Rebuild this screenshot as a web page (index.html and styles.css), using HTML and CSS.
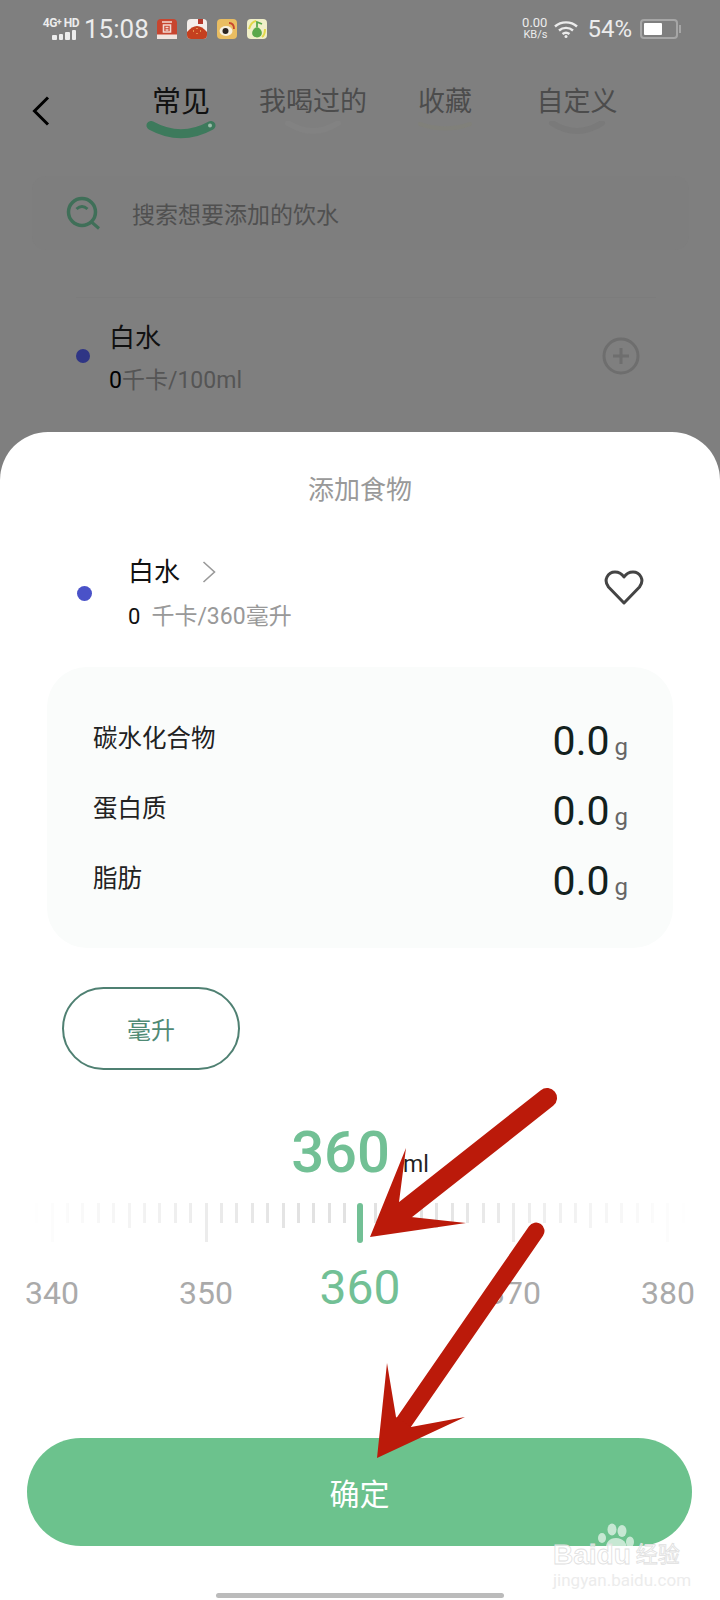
FILE: index.html
```html
<!doctype html>
<html lang="zh-CN">
<head>
    <meta charset="UTF-8">
    <title>添加食物</title>
    <link rel="stylesheet" href="styles.css">
</head>
<body>
    <div class="page">
        <!-- status bar -->
        <div class="status">
            <div class="net">
                <span class="net-type">4G<sup>+</sup> HD</span>
                <span class="bars"><i class="b1"></i><i class="b2"></i><i class="b3"></i><i class="b4"></i></span>
            </div>
            <span class="time">15:08</span>
            <div class="apps">
                <svg width="20" height="20" viewBox="0 0 20 20"><rect width="20" height="20" rx="4" fill="#c8452f"/><path d="M5 3h10M6.500 6h7v7h-7zM8.500 8.500h3M8.500 11h3" fill="none" stroke="#f3d9d2" stroke-width="1.600"/><rect y="15.500" width="20" height="4.500" fill="#f1e4df"/></svg>
                <svg width="20" height="20" viewBox="0 0 20 20"><rect width="20" height="20" rx="4" fill="#f4eeea"/><rect x="11" width="5" height="5" fill="#b5392b"/><path d="M0 13Q10 1 20 13V16Q20 20 16 20H4Q0 20 0 16Z" fill="#c5401f"/><path d="M6 12h1M10 9v1M14 12h-1M10 14v1" stroke="#f0b060" stroke-width="1.400"/></svg>
                <svg width="20" height="20" viewBox="0 0 20 20"><rect width="20" height="20" rx="4" fill="#e9bd62"/><ellipse cx="9" cy="12" rx="6.500" ry="5" fill="#f7f0e0"/><circle cx="8.500" cy="12" r="3" fill="#2a2320"/><path d="M12 4Q17 4 17 10" fill="none" stroke="#c8452f" stroke-width="1.800"/></svg>
                <svg width="20" height="20" viewBox="0 0 20 20"><rect width="20" height="20" rx="4" fill="#f0efc8"/><path d="M10 8C4 10 3 18 10 18.500C17 18 16 10 10 8Z" fill="#5aa84a"/><path d="M10 8V3L15 5" fill="none" stroke="#5aa84a" stroke-width="1.800"/><path d="M2 10Q4 3 9 2M18 10Q18 16 15 18" fill="none" stroke="#e2d84a" stroke-width="2"/></svg>
            </div>
            <div class="speed"><span>0.00</span><span class="speed-unit">KB/s</span></div>
            <svg class="wifi" width="24" height="18" viewBox="0 0 24 18"><path d="M1 6.500C7 1 17 1 23 6.500M5 10.500C9 7 15 7 19 10.500M8.500 14C10.500 12.500 13.500 12.500 15.500 14" fill="none" stroke="#ececec" stroke-width="2.400"/><circle cx="12" cy="16.500" r="1.500" fill="#ececec"/></svg>
            <span class="pct">54%</span>
            <div class="battery"><i class="battery-fill"></i></div>
        </div>

        <!-- page behind the sheet -->
        <div class="tabs">
            <svg class="back" width="18" height="30" viewBox="0 0 18 30"><path d="M16 1.500L2.500 15L16 28.500" fill="none" stroke="#000" stroke-width="3"/></svg>
            <div class="tab tab-on">
                <span>常见</span>
                <svg width="70" height="18" viewBox="0 0 70 18"><path d="M5 4.500Q35 21 65 4.500" fill="none" stroke="#3d7a5c" stroke-width="9" stroke-linecap="round"/><circle cx="64" cy="4.500" r="2" fill="#9dbcab"/></svg>
            </div>
            <div class="tab">
                <span>我喝过的</span>
                <svg width="70" height="18" viewBox="0 0 70 18"><path d="M10 2Q35 18 60 2" fill="none" stroke="#828282" stroke-width="6" stroke-linecap="round"/></svg>
            </div>
            <div class="tab">
                <span>收藏</span>
                <svg width="70" height="18" viewBox="0 0 70 18"><path d="M10 3Q35 12 60 3" fill="none" stroke="#80807a" stroke-width="4" stroke-linecap="round"/></svg>
            </div>
            <div class="tab">
                <span>自定义</span>
                <svg width="70" height="18" viewBox="0 0 70 18"><path d="M10 2Q35 18 60 2" fill="none" stroke="#7a7a7a" stroke-width="6" stroke-linecap="round"/></svg>
            </div>
        </div>

        <div class="search">
            <svg width="34" height="34" viewBox="0 0 34 34"><circle cx="16" cy="16" r="13.500" fill="none" stroke="#3f6f58" stroke-width="3.500"/><path d="M10.500 13Q16 8 21.500 13M25.500 26L33 32.500" fill="none" stroke="#3f6f58" stroke-width="3"/></svg>
            <span>搜索想要添加的饮水</span>
        </div>

        <div class="food-item">
            <i class="dim-dot"></i>
            <div class="food-text">
                <div class="food-name">白水</div>
                <div class="food-sub"><b>0</b>千卡/100ml</div>
            </div>
            <svg class="plus" width="38" height="38" viewBox="0 0 38 38"><circle cx="19" cy="19" r="17" fill="none" stroke="#6e6e6e" stroke-width="3"/><path d="M19 11V27M11 19H27" stroke="#6e6e6e" stroke-width="3"/></svg>
        </div>

        <!-- bottom sheet -->
        <div class="sheet">
            <div class="sheet-title">添加食物</div>

            <div class="head">
                <i class="dot"></i>
                <div class="head-text">
                    <div class="head-name">白水<svg width="14" height="22" viewBox="0 0 14 22"><path d="M1.500 1L12.500 11L1.500 21" fill="none" stroke="#999" stroke-width="1.600"/></svg></div>
                    <div class="head-sub"><b>0</b>千卡/360毫升</div>
                </div>
                <svg class="heart" width="40" height="35" viewBox="0 0 40 35"><path d="M20 33L4.500 17C-1 10 4 2 11 2C15 2 18 4 20 7C22 4 25 2 29 2C36 2 41 10 35.500 17Z" fill="none" stroke="#444" stroke-width="3" stroke-linejoin="round"/></svg>
            </div>

            <div class="nutri">
                <div class="nutri-row"><span class="nutri-name">碳水化合物</span><span class="amount"><b>0.0</b><small>g</small></span></div>
                <div class="nutri-row"><span class="nutri-name">蛋白质</span><span class="amount"><b>0.0</b><small>g</small></span></div>
                <div class="nutri-row"><span class="nutri-name">脂肪</span><span class="amount"><b>0.0</b><small>g</small></span></div>
            </div>

            <div class="unit-pill">毫升</div>

            <div class="reading"><span class="reading-num">360</span><span class="reading-unit">ml</span></div>

            <div class="ruler">
                <i class="tick"></i><i class="tick major"></i><i class="tick"></i><i class="tick"></i><i class="tick"></i><i class="tick"></i><i class="tick mid"></i>
                <i class="tick"></i><i class="tick"></i><i class="tick"></i><i class="tick"></i><i class="tick major"></i>
                <i class="tick"></i><i class="tick"></i><i class="tick"></i><i class="tick"></i><i class="tick mid"></i>
                <i class="tick"></i><i class="tick"></i><i class="tick"></i><i class="tick"></i><i class="tick now"></i>
                <i class="tick"></i><i class="tick"></i><i class="tick"></i><i class="tick"></i><i class="tick mid"></i>
                <i class="tick"></i><i class="tick"></i><i class="tick"></i><i class="tick"></i><i class="tick major"></i>
                <i class="tick"></i><i class="tick"></i><i class="tick"></i><i class="tick"></i><i class="tick mid"></i>
                <i class="tick"></i><i class="tick"></i><i class="tick"></i><i class="tick"></i><i class="tick major"></i><i class="tick"></i>
            </div>

            <div class="scale">
                <span>340</span><span>350</span><span class="scale-now">360</span><span>370</span><span>380</span>
            </div>

            <div class="ok">确定</div>
            <div class="home-bar"></div>
        </div>

        <!-- watermark -->
        <div class="mark">
            <svg class="paw" width="38" height="32" viewBox="0 0 38 32"><g fill="#fff" fill-opacity=".62"><ellipse cx="15" cy="6.500" rx="4.500" ry="6"/><ellipse cx="25" cy="8" rx="4.500" ry="6"/><ellipse cx="5" cy="15" rx="4" ry="5"/><ellipse cx="33" cy="19" rx="4" ry="5.500"/><path d="M19 15C10 15 7 24 10 29C14 33 25 33 29 29C32 24 28 15 19 15Z"/></g></svg>
            <div class="mark-top"><span class="mark-baidu">Baidu</span><span class="mark-cn">经验</span></div>
            <div class="mark-url">jingyan.baidu.com</div>
        </div>

        <!-- red annotation arrows -->
        <svg class="arrows" width="720" height="1600" viewBox="0 0 720 1600">
            <path d="M547 1098L405 1210" stroke="#bb1a0a" stroke-width="20" stroke-linecap="round"/>
            <polygon points="370,1237 406,1148 399,1202 411,1217 466,1223" fill="#bb1a0a"/>
            <path d="M536 1231L404 1422" stroke="#bb1a0a" stroke-width="17" stroke-linecap="round"/>
            <polygon points="377,1458 387,1363 396,1417 411,1427 465,1417" fill="#bb1a0a"/>
        </svg>
    </div>
</body>
</html>
```
FILE: styles.css
```css
*{
    margin: 0;
    padding: 0;
    box-sizing: border-box;
}
html,body{
    background: #7f7f7f;
}
body{
    font-family: Roboto, "Noto Sans CJK SC", sans-serif;
}
i{
    display: block;
    font-style: normal;
}
.page{
    position: relative;
    width: 720px;
    height: 1600px;
    overflow: hidden;
    background: #7f7f7f;
}

/* status bar */
.status{
    height: 56px;
    padding: 2px 42px 0 42px;
    display: flex;
    align-items: center;
    color: #ececec;
}
.net{
    width: 37px;
    display: flex;
    flex-direction: column;
    align-items: flex-end;
}
.net-type{
    font-size: 12px;
    line-height: 11px;
    font-weight: 700;
    white-space: nowrap;
    letter-spacing: -.5px;
}
.net-type sup{
    font-size: 9px;
    line-height: 0;
    vertical-align: 2px;
}
.bars{
    display: flex;
    align-items: flex-end;
    gap: 2px;
    height: 10px;
    margin-top: 1px;
    padding-right: 3px;
}
.bars i{
    width: 4.500px;
    background: #ececec;
    border-radius: 1px;
}
.b1{height: 5px;}
.b2{height: 6px;}
.b3{height: 8px;}
.b4{height: 10px;}
.time{
    margin-left: 5px;
    width: 73px;
    font-size: 26px;
    line-height: 30px;
}
.apps{
    display: flex;
    gap: 10px;
}
.speed{
    margin-left: auto;
    display: flex;
    flex-direction: column;
    align-items: flex-end;
    font-size: 13px;
    line-height: 12px;
}
.speed-unit{
    font-size: 11px;
}
.wifi{
    margin-left: 7px;
}
.pct{
    margin-left: 9px;
    font-size: 24px;
    line-height: 28px;
}
.battery{
    position: relative;
    margin-left: 8px;
    width: 38px;
    height: 20px;
    padding: 2px;
    border: 2px solid #a6a6a6;
    border-radius: 4px;
}
.battery::after{
    content: '';
    position: absolute;
    right: -5px;
    top: 4px;
    width: 2px;
    height: 8px;
    background: #a6a6a6;
}
.battery-fill{
    width: 18px;
    height: 12px;
    background: #fff;
    border-radius: 1px;
}

/* page behind */
.tabs{
    margin-top: 26px;
    padding-left: 32px;
    display: flex;
    align-items: center;
}
.back{
    margin-right: 65px;
}
.tab{
    width: 132px;
    display: flex;
    flex-direction: column;
    align-items: center;
    font-size: 27px;
    line-height: 40px;
    color: #4c4c4c;
}
.tab svg{
    margin-top: -1px;
}
.tab-on{
    font-size: 29px;
    color: #111;
}
.search{
    margin: 37px 31px 0 32px;
    height: 74px;
    padding-left: 34px;
    display: flex;
    align-items: center;
    gap: 32px;
    background: #7e7e7e;
    border-radius: 14px;
    font-size: 23px;
    color: #505050;
}
.food-item{
    margin: 47px 64px 0 76px;
    padding: 22px 16px 0 0;
    display: flex;
    align-items: center;
    border-top: 1px solid #7c7c7c;
}
.dim-dot{
    width: 14px;
    height: 14px;
    margin: 0 19px 6px 0;
    border-radius: 50%;
    background: #2f3585;
}
.food-text{
    flex: 1;
}
.food-name{
    font-size: 26px;
    line-height: 36px;
    color: #111;
}
.food-sub{
    margin-top: 9px;
    font-size: 23px;
    line-height: 32px;
    color: #555;
}
.food-sub b{
    font-weight: 400;
    color: #000;
}
.plus{
    margin-bottom: 6px;
}

/* sheet */
.sheet{
    position: absolute;
    left: 0;
    right: 0;
    top: 432px;
    bottom: 0;
    padding-top: 40px;
    background: #fff;
    border-radius: 48px 48px 0 0;
    overflow: hidden;
}
.sheet-title{
    text-align: center;
    font-size: 26px;
    line-height: 36px;
    color: #999;
}
.head{
    margin-top: 46px;
    padding: 0 76px 0 77px;
    display: flex;
    align-items: center;
}
.dot{
    width: 15px;
    height: 15px;
    margin-right: 36px;
    border-radius: 50%;
    background: #4a52c8;
}
.head-text{
    flex: 1;
}
.head-name{
    display: flex;
    align-items: center;
    gap: 22px;
    font-size: 26px;
    line-height: 36px;
    color: #111;
}
.head-sub{
    margin-top: 11px;
    font-size: 23px;
    line-height: 32px;
    color: #999;
}
.head-sub b{
    margin-right: 11px;
    font-size: 22px;
    font-weight: 400;
    color: #111;
}
.heart{
    margin-top: -12px;
}
.nutri{
    margin: 34px 47px 0;
    height: 281px;
    padding: 36px 45px 0 46px;
    background: #fafcfb;
    border-radius: 40px;
}
.nutri-row{
    height: 70px;
    display: flex;
    align-items: center;
    justify-content: space-between;
    color: #222;
}
.nutri-name{
    margin-bottom: 4px;
    font-size: 24.500px;
}
.amount{
    margin-top: 5px;
    display: flex;
    align-items: baseline;
    gap: 5px;
}
.amount b{
    font-size: 41px;
    line-height: 44px;
    font-weight: 400;
    color: #13211d;
}
.amount small{
    font-size: 24px;
    color: #666;
}
.unit-pill{
    margin: 39px 0 0 62px;
    width: 178px;
    height: 83px;
    display: flex;
    align-items: center;
    justify-content: center;
    border: 2px solid #4f8072;
    border-radius: 42px;
    font-size: 24px;
    color: #4f8a75;
}
.reading{
    margin-top: 52px;
    display: flex;
    justify-content: center;
    align-items: baseline;
    gap: 13px;
}
.reading-num{
    font-size: 58px;
    line-height: 60px;
    font-weight: 500;
    color: #72c095;
}
.reading-unit{
    font-size: 23px;
    color: #222;
}
.ruler{
    margin-top: 21px;
    height: 40px;
    display: flex;
    justify-content: center;
    -webkit-mask-image: linear-gradient(90deg, rgba(0,0,0,.05) 40px, #000 300px, #000 420px, rgba(0,0,0,.05) 680px);
    mask-image: linear-gradient(90deg, rgba(0,0,0,.05) 40px, #000 300px, #000 420px, rgba(0,0,0,.05) 680px);
}
.tick{
    flex: 0 0 15.400px;
    display: flex;
    justify-content: center;
}
.tick::before{
    content: '';
    width: 3px;
    height: 20px;
    background: #e2e2e2;
}
.tick.mid::before{
    height: 25px;
}
.tick.major::before{
    height: 39px;
}
.tick.now::before{
    width: 6px;
    height: 40px;
    border-radius: 3px;
    background: #72c095;
}
.scale{
    margin-top: 17px;
    display: flex;
    justify-content: center;
    align-items: baseline;
    font-size: 32px;
    line-height: 56px;
    color: #aaa;
}
.scale span{
    flex: 0 0 154px;
    text-align: center;
}
.scale .scale-now{
    font-size: 48px;
    color: #72c095;
}
.ok{
    margin: 117px 28px 0 27px;
    height: 108px;
    display: flex;
    align-items: center;
    justify-content: center;
    border-radius: 54px;
    background: #6cc28d;
    font-size: 30px;
    color: #fff;
}
.home-bar{
    margin: 47px auto 0;
    width: 288px;
    height: 5px;
    border-radius: 3px;
    background: #bbb;
}

/* watermark */
.mark{
    position: absolute;
    left: 553px;
    top: 1523px;
    width: 128px;
    padding-top: 18px;
}
.paw{
    position: absolute;
    left: 44px;
    top: 0;
}
.mark-top{
    position: relative;
    display: flex;
    align-items: center;
    line-height: 28px;
    color: rgba(255,255,255,.6);
    -webkit-text-stroke: .8px #e0e0e0;
}
.mark-baidu{
    font-family: "Liberation Sans", sans-serif;
    font-size: 28px;
    font-weight: 700;
}
.mark-cn{
    margin-left: 5px;
    font-size: 22px;
    white-space: nowrap;
}
.mark-url{
    margin-top: 1px;
    font-size: 17px;
    line-height: 20px;
    white-space: nowrap;
    color: #ececec;
}

.arrows{
    position: absolute;
    left: 0;
    top: 0;
    pointer-events: none;
}
```
